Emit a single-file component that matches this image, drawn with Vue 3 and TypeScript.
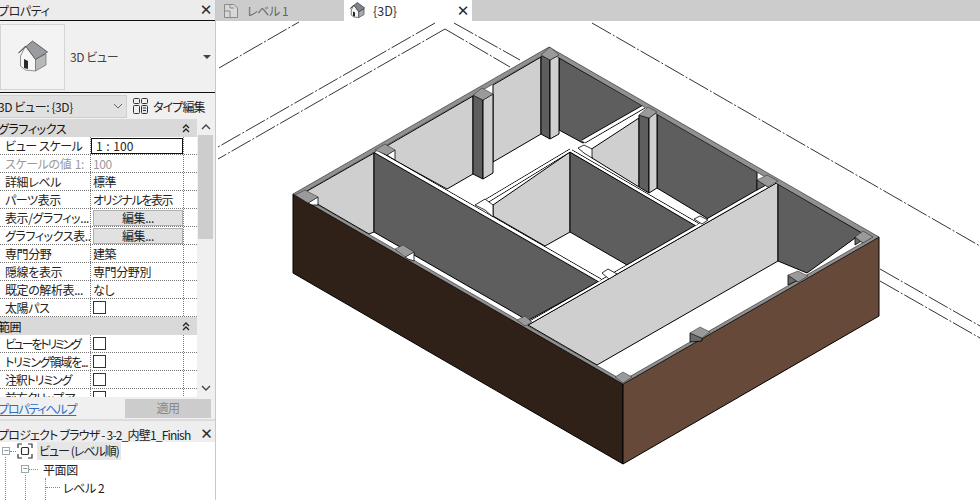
<template>
  <div class="app">
    <aside class="side">
      <div class="panelTitle"><span class="clip">プロパティ</span><span class="closeX">✕</span></div>

      <div class="typeBox">
        <div class="thumb">
          <svg width="34" height="34" viewBox="0 0 34 34">
            <path d="M9.5 6 L19.5 19 V31 L9.5 30 L4.5 26 V16 Z" fill="#f6f6f6" stroke="#777" stroke-width=".8" />
            <path d="M19.5 19 L30 14 V25 L19.5 31 Z" fill="#b6b8ba" stroke="#777" stroke-width=".8" />
            <path d="M2.5 13 L16.5 1 L31.5 12 L19.5 19.5 L9.5 6 Z" fill="#989ca0" stroke="#555" stroke-width=".9" />
            <path d="M8 19 L12 21 V29 L8 28 Z" fill="#2a2a2a" />
          </svg>
        </div>
        <span class="typeName">3D ビュー</span>
        <span class="typeCaret"></span>
      </div>

      <div class="selectorRow">
        <div class="selector">
          <span class="clip">3D ビュー: {3D}</span>
          <svg width="10" height="6" viewBox="0 0 10 6"><path d="M1 1 L5 5 L9 1" fill="none" stroke="#666" /></svg>
        </div>
        <div class="typeEdit">
          <svg width="17" height="18" viewBox="0 0 17 18" fill="none" stroke="#333">
            <rect x="1.5" y="1.5" width="6" height="5" rx="1" />
            <rect x="9.5" y="1.5" width="6" height="5" rx="1" />
            <rect x="1.5" y="8.5" width="6" height="8" rx="1" />
            <rect x="9.5" y="8.5" width="6" height="8" rx="1" fill="#dfe6ee" />
            <path d="M11 11 H14 M11 13.5 H14" />
          </svg>
          <span>タイプ編集</span>
        </div>
      </div>

      <div class="propsArea">
        <div class="props">
          <template v-for="row in rows" :key="row.label">
            <div v-if="row.kind === 'head'" class="headRow">
              <span class="clip">{{ row.label }}</span>
              <svg class="fold" width="8" height="9" viewBox="0 0 8 9" fill="none" stroke="#222" stroke-width="1.3">
                <path d="M1 4 L4 1 L7 4 M1 8 L4 5 L7 8" />
              </svg>
            </div>
            <div v-else class="row" :class="{ dim: row.dim }">
              <div class="label" :class="row.labelClass">
                <span>{{ row.label }}</span>
                <span v-if="row.note" class="note">{{ row.note }}</span>
              </div>
              <div class="value" :class="{ tight: row.tightValue }">
                <div v-if="row.kind === 'input'" class="input">{{ row.value }}</div>
                <div v-else-if="row.kind === 'btn'" class="editBtn">{{ row.value }}</div>
                <div v-else-if="row.kind === 'check'" class="check"></div>
                <span v-else>{{ row.value }}</span>
              </div>
              <div class="tail"></div>
            </div>
          </template>
        </div>
        <div class="scroll">
          <svg width="10" height="6" viewBox="0 0 10 6" fill="none" stroke="#444" stroke-width="1.4"><path d="M1 5 L5 1 L9 5" /></svg>
          <div class="thumbBar"></div>
          <svg class="scrollDown" width="10" height="6" viewBox="0 0 10 6" fill="none" stroke="#444" stroke-width="1.4"><path d="M1 1 L5 5 L9 1" /></svg>
        </div>
      </div>

      <div class="helpRow">
        <a class="help">プロパティヘルプ</a>
        <div class="apply">適用</div>
      </div>

      <div class="panelTitle browserTitle">
        <span class="clip">プロジェクト ブラウザ - 3-2_内壁1_Finish</span><span class="closeX">✕</span>
      </div>

      <div class="tree">
        <span class="vline v1"></span>
        <span class="vline v2"></span>
        <span class="vline v3"></span>
        <div class="treeRow">
          <span class="box">−</span><span class="dots short"></span>
          <svg width="16" height="16" viewBox="0 0 16 16" fill="none" stroke="#333" stroke-width="1.2">
            <path d="M1 5 V1 H5 M11 1 H15 V5 M15 11 V15 H11 M5 15 H1 V11" />
            <rect x="4.5" y="4.5" width="7" height="7" rx="1" />
          </svg>
          <span class="treeSel">ビュー (レベル順)</span>
        </div>
        <div class="treeRow lv2">
          <span class="box">−</span><span class="dots"></span><span class="planLabel">平面図</span>
        </div>
        <div class="treeRow lv3">
          <span class="dots long"></span><span>レベル 2</span>
        </div>
      </div>
    </aside>

    <main class="main">
      <div class="tabs">
        <div class="tab">
          <svg width="18" height="18" viewBox="0 0 18 18" fill="#d8d8d8" stroke="#8a8a8a">
            <path d="M2.5 2.5 H12 L15.5 6 V15.5 H2.5 Z" />
            <path d="M2.5 9 H8 V15 M8 2.5 V6 H12" fill="none" />
          </svg>
          <span>レベル 1</span>
        </div>
        <div class="tab active">
          <svg width="17" height="17" viewBox="0 0 34 34">
            <path d="M9.5 6 L19.5 19 V31 L9.5 30 L4.5 26 V16 Z" fill="#f6f6f6" stroke="#555" stroke-width="1.6" />
            <path d="M19.5 19 L30 14 V25 L19.5 31 Z" fill="#a9adb2" stroke="#555" stroke-width="1.6" />
            <path d="M2.5 13 L16.5 1 L31.5 12 L19.5 19.5 L9.5 6 Z" fill="#7f858b" stroke="#444" stroke-width="1.6" />
            <path d="M8 19 L12 21 V29 L8 28 Z" fill="#222" />
          </svg>
          <span class="tabName">{3D}</span>
          <span class="closeX tabClose">✕</span>
        </div>
      </div>

      <svg class="canvas" viewBox="216 21 764 479" width="764" height="479">
        <!-- construction lines -->
        <g fill="none" stroke="#000" stroke-width=".8" stroke-dasharray="22 2 2 2">
          <path v-for="(d, i) in dashLines" :key="i" :d="d" />
        </g>

        <!-- everything inside the outer rim is white floor -->
        <polygon points="293,194 549,47 879,237 623,384" fill="#fff" />

        <!-- outer brick faces -->
        <polygon points="293,194 623,384 623,464 293,273" fill="#2f2018" stroke="#000" />
        <polygon points="623,384 879,237 879,316 623,464" fill="#67493a" stroke="#000" />

        <!-- wall faces -->
        <polygon v-for="(p, i) in lightFaces" :key="'l' + i" :points="p" fill="#cfcfcf" stroke="#000" />
        <polygon v-for="(p, i) in darkFaces" :key="'d' + i" :points="p" fill="#5e5e5e" stroke="#000" />

        <!-- columns -->
        <g stroke="#000">
          <polygon points="473,95 483,100 483,179 473,174" fill="#5e5e5e" />
          <polygon points="483,100 493,94 493,173 483,179" fill="#cfcfcf" />
          <polygon points="541,55 550,60 550,139 541,134" fill="#5e5e5e" />
          <polygon points="550,60 559,55 559,134 550,139" fill="#cfcfcf" />
          <polygon points="639,115 649,118 649,193 639,187" fill="#5e5e5e" />
          <polygon points="649,118 657,112 657,188 649,193" fill="#cfcfcf" />
        </g>

        <!-- white tops of the inner partitions -->
        <g fill="none" stroke="#000" stroke-width="1">
          <path d="M377,150 L601,279 M375,153 L599,282" />
          <path d="M478,204 L570,149 M482,206 L570,152" />
          <path d="M572,150 L698,223 M570,152 L696,226" />
          <path d="M582,140 L645,104 M585,143 L645,108" />
          <path d="M528,325 L778,182 M528,322 L776,179" />
        </g>
        <g fill="#fff" stroke="none">
          <polygon points="377,150.5 601,279.5 599,281.5 375,152.5" />
          <polygon points="478,204.5 570,149.5 570,151.5 482,205.5" />
          <polygon points="572,150.5 698,223.5 696,225.5 570,151.5" />
          <polygon points="582,140.5 645,104.5 645,107.5 585,142.5" />
          <polygon points="528,322.5 776,179.5 778,181.5 528,324.5" />
        </g>

        <!-- junction notches -->
        <g fill="#fff" stroke="#000" stroke-width=".8">
          <path d="M475,205 L485,199 L493,205 L493,217 L485,210 Z" />
          <path d="M578,148 L584,145 L592,149 L592,158 L584,153 Z" />
          <path d="M602,273 L608,269 L617,274 L609,279 Z" />
          <path d="M694,219 L700,216 L708,220 L702,224 Z" />
        </g>

        <!-- top rim -->
        <path
          fill="#919191"
          stroke="#000"
          stroke-width=".5"
          fill-rule="evenodd"
          d="M293,194 L549,47 L879,237 L623,384 Z M300,194.7 L623,380.5 L871,238 L549,52 Z"
        />

        <!-- short wall stubs below the caps -->
        <g stroke="#000" stroke-width=".8">
          <polygon v-for="(p, i) in whiteStubs" :key="'w' + i" :points="p" fill="#fff" />
          <polygon v-for="(p, i) in darkStubs" :key="'s' + i" :points="p" fill="#6a6a6a" />
        </g>

        <!-- column caps on the rim -->
        <g fill="#9a9a9a" stroke="#222" stroke-width=".5">
          <polygon v-for="(p, i) in caps" :key="'c' + i" :points="p" />
        </g>
      </svg>
    </main>
  </div>
</template>

<script setup lang="ts">
type RowKind = 'head' | 'text' | 'input' | 'btn' | 'check'

interface PropRow {
  kind: RowKind
  label: string
  value?: string
  note?: string
  dim?: boolean
  labelClass?: string
  tightValue?: boolean
}

const rows: PropRow[] = [
  { kind: 'head', label: 'グラフィックス' },
  { kind: 'input', label: 'ビュー スケール', value: '1 : 100' },
  { kind: 'text', label: 'スケールの値', note: '1:', value: '100', dim: true },
  { kind: 'text', label: '詳細レベル', value: '標準' },
  { kind: 'text', label: 'パーツ表示', value: 'オリジナルを表示', tightValue: true },
  { kind: 'btn', label: '表示/グラフィッ...', value: '編集...' },
  { kind: 'btn', label: 'グラフィックス表...', value: '編集...' },
  { kind: 'text', label: '専門分野', value: '建築' },
  { kind: 'text', label: '隠線を表示', value: '専門分野別' },
  { kind: 'text', label: '既定の解析表...', value: 'なし' },
  { kind: 'check', label: '太陽パス' },
  { kind: 'head', label: '範囲' },
  { kind: 'check', label: 'ビューをトリミング', labelClass: 'tighter' },
  { kind: 'check', label: 'トリミング領域を...', labelClass: 'tight' },
  { kind: 'check', label: '注釈トリミング', labelClass: 'tight' },
  { kind: 'check', label: '前方クリップ ア', labelClass: 'tight' },
]

const dashLines = [
  'M219,68 L299,22',
  'M435,23 L218,147',
  'M445,29 L218,159',
  'M445,29 L510,67',
  'M454,23 L520,60',
  'M592,23 L980,246',
  'M880,269 L980,326',
  'M880,281 L980,338',
]

const lightFaces = [
  '301,194.5 374,153 374,232 369,234',
  '378,151 473,96 473,174 447,189',
  '493,85 541,57 541,134 493,162',
  '493,205 570,152 570,232 545,246 493,216',
  '590,150 639,118 639,187 592,158',
  '528,325 778,182 778,261 597,365',
]

const darkFaces = [
  '374,152 600,281 527,321 520,316 374,232',
  '559,58 645,107 583,143 559,130',
  '570,152 697,226 627,265 570,232',
  '657,114 757,172 757,193 710,220 657,188',
  '778,184 862,233 807,273 778,261',
]

const whiteStubs = [
  '308,203 318,197 318,205 312,205',
  '387,155 395,150 395,160 390,157',
  '405,257 414,252 414,261 408,259',
]

const darkStubs = [
  '690,333 702,338 702,341 690,342',
  '788,275 798,282 798,280 788,285',
  '855,237 863,243 863,240 855,245',
  '757,180 768,187 768,184 757,190',
]

const caps = [
  '295,195 305,190 318,197 308,203',
  '375,150 385,144 395,150 387,155',
  '473,95 482,88 493,94 483,100',
  '541,55 550,47 559,55 550,60',
  '639,115 648,107 657,112 649,118',
  '757,180 767,175 778,181 768,187',
  '855,237 863,231 873,237 863,243',
  '788,275 798,271 808,276 798,282',
  '690,333 700,327 710,332 702,338',
  '615,377 623,372 632,377 623,383',
  '517,320 525,316 532,322 525,326',
  '395,249 403,245 414,252 405,257',
]
</script>

<style>
html,
body {
  margin: 0;
  background: #fff;
}
</style>

<style scoped>
.app {
  display: flex;
  width: 980px;
  height: 500px;
  overflow: hidden;
  font-family: "Noto Sans CJK JP", "Noto Sans", sans-serif;
  font-size: 12px;
  font-feature-settings: "palt";
  letter-spacing: -0.4px;
  color: #222;
}

.side {
  width: 216px;
  flex: none;
  display: flex;
  flex-direction: column;
  background: #f0f0f0;
  border-right: 1px solid #c8c8c8;
  box-sizing: border-box;
  overflow: hidden;
}

.panelTitle {
  height: 21px;
  flex: none;
  display: flex;
  align-items: center;
  justify-content: space-between;
  padding: 0 3px 0 0;
  box-sizing: border-box;
  border-bottom: 1px solid #111;
  background: #ececec;
}

.clip {
  margin-left: -2px;
  white-space: nowrap;
}

.closeX {
  font-family: "DejaVu Sans", sans-serif;
  font-size: 15px;
  font-weight: 700;
  color: #2a2a2a;
}

.typeBox {
  height: 72px;
  flex: none;
  display: flex;
  align-items: center;
  border-bottom: 1px solid #111;
  box-sizing: border-box;
}

.thumb {
  width: 65px;
  height: 66px;
  display: flex;
  align-items: center;
  justify-content: center;
  border: 1px solid #d4d4d4;
  box-sizing: border-box;
  background: #f3f3f3;
}

.typeName {
  margin-left: 5px;
  color: #444;
}

.typeCaret {
  margin-left: auto;
  margin-right: 4px;
  border-left: 4px solid transparent;
  border-right: 4px solid transparent;
  border-top: 4px solid #444;
}

.selectorRow {
  height: 26px;
  flex: none;
  display: flex;
  align-items: center;
  gap: 5px;
}

.selector {
  width: 127px;
  height: 23px;
  display: flex;
  align-items: center;
  justify-content: space-between;
  padding-right: 3px;
  box-sizing: border-box;
  background: #e1e1e1;
  border: 1px solid #cfcfcf;
  border-left: 0;
}

.typeEdit {
  display: flex;
  align-items: center;
  gap: 4px;
  letter-spacing: -0.9px;
}

.propsArea {
  flex: none;
  height: 278px;
  display: flex;
  overflow: hidden;
}

.props {
  width: 197px;
  flex: none;
}

.headRow {
  height: 18px;
  display: flex;
  align-items: center;
  justify-content: space-between;
  padding-right: 7px;
  background: #d9d9d9;
  color: #111;
}

.row {
  height: 18px;
  display: grid;
  grid-template-columns: 91px 93px 13px;
  background: #fff;
  border-bottom: 1px dotted #777;
  box-sizing: border-box;
}

.row.dim {
  color: #9a9a9a;
}

.label {
  display: flex;
  align-items: center;
  justify-content: space-between;
  padding: 0 4px 0 5px;
  white-space: nowrap;
  overflow: hidden;
  border-right: 1px dotted #777;
}

.label.tight {
  letter-spacing: -1.2px;
}

.label.tighter {
  letter-spacing: -2.2px;
}

.note {
  margin-right: 2px;
}

.value {
  display: flex;
  align-items: center;
  padding-left: 2px;
  border-right: 1px dotted #777;
  white-space: nowrap;
  overflow: hidden;
}

.value.tight {
  letter-spacing: -1.4px;
}

.input {
  width: 92px;
  height: 16px;
  margin-left: -2px;
  padding-left: 4px;
  line-height: 14px;
  letter-spacing: 0;
  word-spacing: 1px;
  box-sizing: border-box;
  border: 1px solid #111;
  background: #fff;
}

.editBtn {
  width: 90px;
  height: 16px;
  line-height: 14px;
  text-align: center;
  box-sizing: border-box;
  background: #e1e1e1;
  border: 1px solid #b0b0b0;
}

.check {
  width: 13px;
  height: 13px;
  box-sizing: border-box;
  border: 1px solid #333;
  background: #fff;
}

.scroll {
  width: 15px;
  margin-left: 1px;
  padding-top: 5px;
  display: flex;
  flex-direction: column;
  align-items: center;
  box-sizing: border-box;
  background: #f0f0f0;
}

.thumbBar {
  width: 15px;
  height: 104px;
  margin-top: 5px;
  background: #cdcdcd;
}

.scrollDown {
  margin-top: auto;
  margin-bottom: 6px;
}

.helpRow {
  height: 24px;
  flex: none;
  display: flex;
  align-items: center;
  justify-content: space-between;
  padding-right: 4px;
  border-bottom: 2px solid #dcdcdc;
  box-sizing: border-box;
}

.help {
  margin-left: -2px;
  color: #2a6fc4;
  text-decoration: underline;
  white-space: nowrap;
  letter-spacing: -1.2px;
}

.apply {
  width: 86px;
  height: 19px;
  line-height: 18px;
  text-align: center;
  background: #cccccc;
  color: #888;
}

.browserTitle {
  height: 21px;
  padding-top: 5px;
  border-bottom: 0;
  background: #eeeeee;
  letter-spacing: -0.8px;
}

.tree {
  position: relative;
  flex: 1;
  background: #fff;
  padding: 0 0 0 2px;
}

.vline {
  position: absolute;
  width: 0;
  border-left: 1px dotted #888;
}

.v1 {
  left: 5px;
  top: 15px;
  bottom: 0;
}

.v2 {
  left: 25px;
  top: 33px;
  bottom: 0;
}

.v3 {
  left: 45px;
  top: 36px;
  bottom: 0;
}

.treeRow {
  position: relative;
  height: 18px;
  display: flex;
  align-items: center;
  white-space: nowrap;
}

.treeRow.lv2 {
  padding-left: 19px;
}

.treeRow.lv3 {
  padding-left: 44px;
}

.box {
  width: 8px;
  height: 8px;
  line-height: 6px;
  text-align: center;
  font-size: 9px;
  color: #667;
  box-sizing: border-box;
  border: 1px solid #9aa;
  background: #fff;
}

.dots {
  width: 9px;
  margin-right: 1px;
  border-top: 1px dotted #888;
}

.dots.short {
  width: 6px;
}

.dots.long {
  width: 14px;
  margin-right: 3px;
}

.planLabel {
  margin-left: 4px;
}

.treeSel {
  margin-left: 4px;
  padding: 0 2px;
  line-height: 18px;
  letter-spacing: -1px;
  background: #e6e6e6;
}

.main {
  flex: 1;
  display: flex;
  flex-direction: column;
  min-width: 0;
}

.tabs {
  height: 21px;
  flex: none;
  display: flex;
  background: #cccccc;
}

.tab {
  width: 128px;
  display: flex;
  align-items: center;
  gap: 7px;
  padding-left: 6px;
  box-sizing: border-box;
  color: #666;
}

.tab.active {
  width: 128px;
  background: #fff;
  color: #333;
  padding-left: 5px;
}

.tabName {
  letter-spacing: 0;
  font-size: 12.5px;
}

.tabClose {
  margin-left: auto;
  margin-right: 3px;
}

.canvas {
  display: block;
}
</style>
